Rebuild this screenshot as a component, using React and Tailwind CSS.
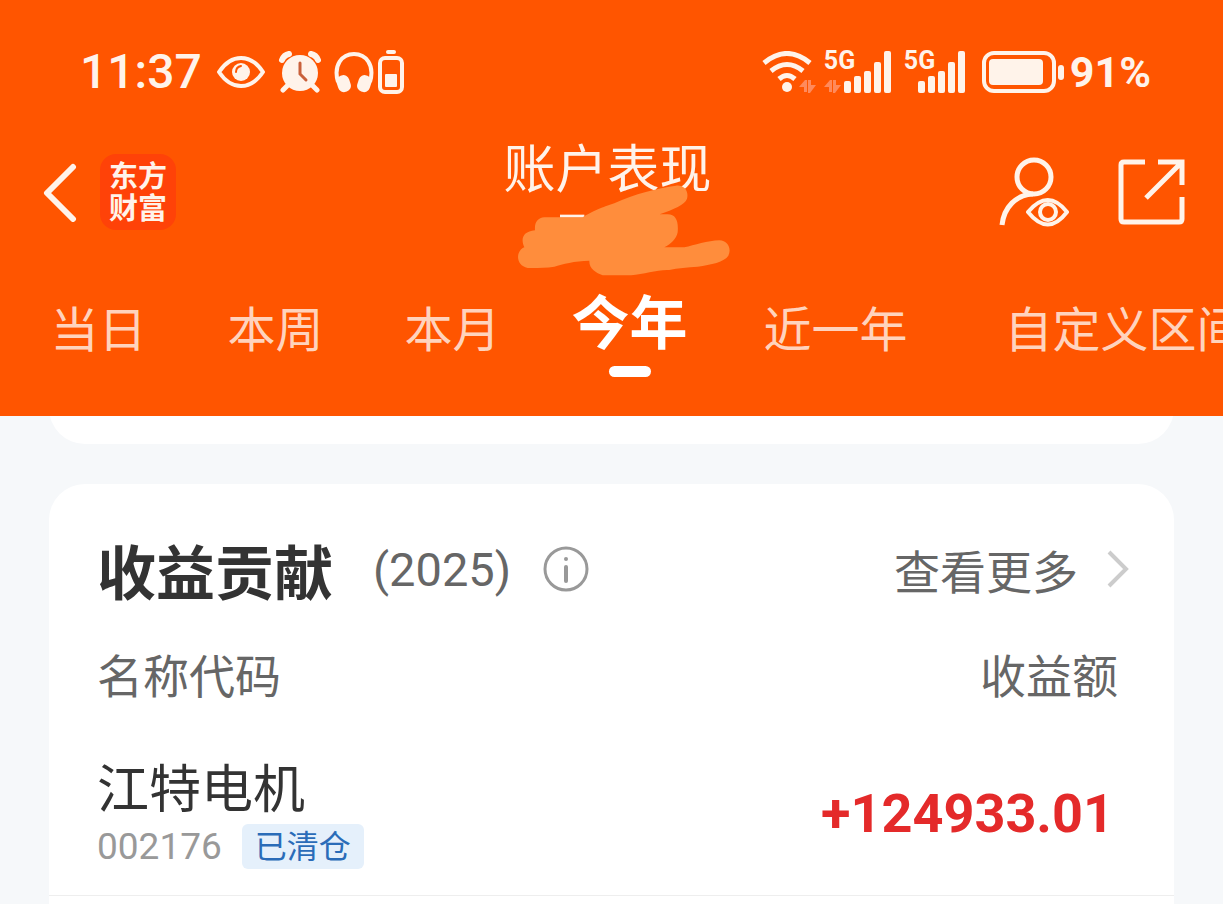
import { useState } from 'react';

// Tabs share one width per label length
const tabs = [
  { name: '当日', width: 'w-[177px]' },
  { name: '本周', width: 'w-[177px]' },
  { name: '本月', width: 'w-[177px]' },
  { name: '今年', width: 'w-[177px]' },
  { name: '近一年', width: 'w-[235px]' },
  { name: '自定义区间', width: 'w-[343px]' },
];

const holdings = [
  { name: '江特电机', code: '002176', status: '已清仓', profit: '+124933.01' },
];

function SignalBars() {
  return (
    <svg width="48" height="42" viewBox="0 0 48 42" fill="currentColor">
      <rect x="0" y="30" width="7" height="12" rx="2" />
      <rect x="10" y="25" width="7" height="17" rx="2" />
      <rect x="20" y="20" width="7" height="22" rx="2" />
      <rect x="30" y="11" width="7" height="31" rx="2" />
      <rect x="40" y="0" width="7" height="42" rx="2" />
    </svg>
  );
}

function DataArrows({ className }) {
  return (
    <svg className={className} width="17" height="13" viewBox="0 0 17 13" fill="#ff8a5c">
      <path d="M0 7 6 0h2v12H5V7zM9 0h3v5h5l-6 8H9z" />
    </svg>
  );
}

function StatusBar() {
  return (
    <div className="flex h-12 items-center justify-between pl-20 pr-[72px] font-[Roboto,sans-serif] text-[#fff3ea]">
      <div className="flex items-center">
        <span className="text-[48px] font-medium leading-none">11:37</span>
        <svg className="ml-[14px]" width="50" height="34" viewBox="0 0 50 34" fill="none">
          <path d="M3 17C9 8 17 3 25 3s16 5 22 14c-6 9-14 14-22 14S9 26 3 17z" stroke="currentColor" strokeWidth="4" strokeLinejoin="round" />
          <circle cx="25" cy="17" r="9" fill="currentColor" />
          <path d="M20 17q0-5 5-6" stroke="#ff5500" strokeWidth="2" strokeLinecap="round" />
        </svg>
        <svg className="ml-3" width="44" height="42" viewBox="0 0 44 42" fill="none">
          <circle cx="22" cy="22" r="18" fill="currentColor" />
          <path d="M4 9Q6 4 11 3M33 3q5 1 7 6" stroke="currentColor" strokeWidth="6" strokeLinecap="round" />
          <path d="m9 35-4 4M35 35l4 4" stroke="currentColor" strokeWidth="5" strokeLinecap="round" />
          <path d="M22 12v11l6 6" stroke="#c9603a" strokeWidth="3" strokeLinecap="round" />
        </svg>
        <svg className="ml-3" width="40" height="42" viewBox="0 0 40 42" fill="none">
          <path d="M4 31C-1 14 8 3 20 3s21 11 16 28" stroke="currentColor" strokeWidth="4" />
          <rect x="3" y="24" width="13" height="17" rx="6" transform="rotate(-18 10 32)" fill="currentColor" />
          <rect x="24" y="24" width="13" height="17" rx="6" transform="rotate(18 30 32)" fill="currentColor" />
        </svg>
        <svg className="ml-1" width="26" height="44" viewBox="0 0 26 44" fill="none">
          <rect x="8" y="0" width="10" height="4" rx="2" fill="currentColor" />
          <rect x="2" y="8" width="22" height="34" rx="5" stroke="currentColor" strokeWidth="4" />
          <rect x="7" y="24" width="12" height="13" rx="1" fill="currentColor" />
        </svg>
      </div>

      <div className="flex items-center">
        <div className="relative">
          <svg width="50" height="42" viewBox="0 0 50 42" fill="none" stroke="currentColor" strokeWidth="5">
            <path d="M2 12Q25-7 48 12" />
            <path d="M9 20q16-13 32 0" />
            <path d="M17 28q8-7 16 0" />
            <circle cx="25" cy="36" r="5" fill="currentColor" stroke="none" />
          </svg>
          <DataArrows className="absolute -right-1 bottom-0" />
        </div>
        <div className="relative ml-3 flex h-[42px] w-[68px] justify-end">
          <span className="absolute left-0 top-0 text-[25px] font-bold leading-5">5G</span>
          <DataArrows className="absolute bottom-0 left-0" />
          <SignalBars />
        </div>
        <div className="relative ml-3 flex h-[42px] w-[62px] justify-end">
          <span className="absolute left-0 top-0 text-[25px] font-bold leading-5">5G</span>
          <SignalBars />
        </div>
        <svg className="ml-4" width="82" height="42" viewBox="0 0 82 42" fill="none">
          <rect x="2" y="2" width="70" height="38" rx="10" stroke="currentColor" strokeWidth="4" />
          <rect x="7" y="8" width="54" height="26" rx="4" fill="currentColor" />
          <rect x="76" y="14" width="6" height="15" rx="3" fill="currentColor" />
        </svg>
        <span className="ml-[6px] text-[43px] font-bold leading-none">91%</span>
      </div>
    </div>
  );
}

function NavBar() {
  return (
    <div className="mt-10 grid h-28 grid-cols-[1fr_auto_1fr] items-center pl-9 pr-[38px] text-[#fff3ea]">
      <div className="flex items-center gap-5">
        <button aria-label="返回">
          <svg width="44" height="60" viewBox="0 0 44 60" fill="none" stroke="currentColor" strokeWidth="6" strokeLinecap="round" strokeLinejoin="round">
            <path d="M37 5 11 31l26 26" />
          </svg>
        </button>
        <div className="flex h-[76px] w-[76px] items-center justify-center rounded-2xl bg-[#ff4208] pb-1 text-center text-[29px] font-bold leading-8">
          <span>东方<br />财富</span>
        </div>
      </div>

      <div className="relative self-start pr-[6px]">
        <h1 className="text-[52px] leading-[60px]">账户表现</h1>
        {/* Brush stroke hiding the account number */}
        <svg className="absolute left-[14px] top-12" width="214" height="92" viewBox="78 160 642 276">
          <path d="M207 252h73v9h-73z" fill="#fff3ea" />
          <path d="M160 260H275C330 228 345 228 370 218C430 190 500 172 555 165C580 162 594 182 588 204C582 222 548 236 506 251H530C555 251 563 272 560 305C556 325 540 340 520 350H580C610 344 650 330 685 329C712 331 722 355 712 375C700 394 660 402 620 408C590 410 560 412 535 418C500 416 460 430 420 434H335C315 426 294 415 295 390C250 391 215 400 190 408C160 412 130 413 110 412C85 407 77 385 83 368C87 357 93 353 100 350C88 325 96 302 132 299C130 275 140 262 160 260Z" fill="#ff8d3c" />
        </svg>
      </div>

      <div className="flex items-center justify-end gap-12">
        <button aria-label="账户">
          <svg width="70" height="70" viewBox="0 0 70 70" fill="none" stroke="currentColor" strokeWidth="5">
            <circle cx="35" cy="20" r="17" />
            <path d="M3 68C5 50 17 38 34 37" />
            <path d="M29 55Q49 31 68 55Q49 80 29 55z" strokeWidth="4" strokeLinejoin="round" />
            <circle cx="49" cy="55" r="8" strokeWidth="4" />
          </svg>
        </button>
        <button aria-label="分享">
          <svg width="68" height="68" viewBox="0 0 68 68" fill="none" stroke="currentColor" strokeWidth="5">
            <path d="M28 4H7Q4 4 4 7V61q0 3 3 3H62q3 0 3-3V39" />
            <path d="M41 4H65V27M64 5 29 40" />
          </svg>
        </button>
      </div>
    </div>
  );
}

export default function App() {
  const [active, setActive] = useState('今年');

  return (
    <div className="flex min-h-screen flex-col overflow-hidden bg-[#f6f8fa] font-['Noto_Sans_CJK_SC',sans-serif]">
      <header className="bg-[#ff5500] pt-12">
        <StatusBar />
        <NavBar />

        {/* Period tabs, the last one runs off the edge */}
        <nav className="mt-7 flex h-[140px] items-start overflow-hidden pl-[10px]">
          {tabs.map((tab) => {
            const isActive = tab.name === active;

            return (
              <button
                key={tab.name}
                onClick={() => setActive(tab.name)}
                className={`shrink-0 whitespace-nowrap ${tab.width} ${
                  isActive
                    ? 'text-[58px] font-bold leading-[86px] text-white'
                    : 'text-[48px] leading-[100px] text-[#ffd3bd]'
                }`}
              >
                {tab.name}
                {isActive && <span className="mx-auto mt-1 block h-[11px] w-[42px] rounded-full bg-white" />}
              </button>
            );
          })}
        </nav>
      </header>

      <main className="flex flex-1 flex-col px-[49px]">
        {/* Bottom edge of the previous card */}
        <div className="flex h-7 items-end overflow-hidden">
          <div className="h-20 w-full shrink-0 rounded-[36px] bg-white" />
        </div>

        <section className="mt-10 flex-1 rounded-t-[36px] bg-white pt-10">
          <div className="flex h-[90px] items-center justify-between pl-12 pr-11">
            <div className="flex items-center">
              <h2 className="text-[59px] font-bold leading-none text-[#333333]">收益贡献</h2>
              <span className="ml-10 font-[Roboto,sans-serif] text-[47px] leading-none text-[#666666]">(2025)</span>
              <button aria-label="说明" className="ml-8">
                <svg width="46" height="46" viewBox="0 0 46 46" fill="none" stroke="#999999">
                  <circle cx="23" cy="23" r="21" strokeWidth="3" />
                  <path d="M23 21v14" strokeWidth="4" strokeLinecap="round" />
                  <circle cx="23" cy="13" r="2" fill="#999999" stroke="none" />
                </svg>
              </button>
            </div>
            <a href="#more" className="flex items-center text-[46px] leading-none text-[#666666]">
              查看更多
              <svg className="ml-7" width="24" height="38" viewBox="0 0 24 38" fill="none" stroke="#cccccc" strokeWidth="4">
                <path d="M3 2 20 19 3 36" />
              </svg>
            </a>
          </div>

          <table className="w-full">
            <thead>
              <tr className="h-[118px] text-[46px] leading-none text-[#666666]">
                <th className="pl-12 text-left font-normal">名称代码</th>
                <th className="pr-14 text-right font-normal">收益额</th>
              </tr>
            </thead>
            <tbody>
              {holdings.map((item) => (
                <tr key={item.code} className="border-b border-[#eeeeee]">
                  <td className="pb-[26px] pl-12 pt-4">
                    <div className="text-[52px] leading-[76px] text-[#333333]">{item.name}</div>
                    <div className="flex items-center gap-5">
                      <span className="font-[Roboto,sans-serif] text-[37px] leading-none text-[#999999]">{item.code}</span>
                      <span className="rounded-md bg-[#e5f0fb] px-[13px] pb-1 text-[32px] leading-[41px] text-[#2a6cb8]">{item.status}</span>
                    </div>
                  </td>
                  <td className="pr-[60px] text-right font-[Roboto,sans-serif] text-[54px] font-bold leading-none text-[#e42a2a]">
                    {item.profit}
                  </td>
                </tr>
              ))}
            </tbody>
          </table>
        </section>
      </main>
    </div>
  );
}
